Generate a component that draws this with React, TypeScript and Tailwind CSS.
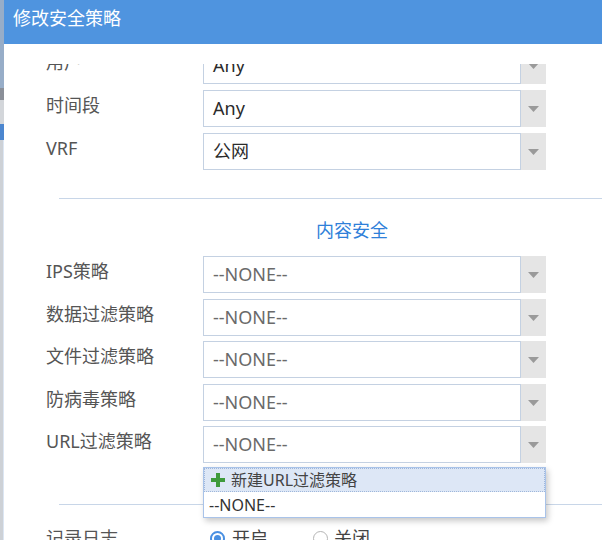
import { FC } from "react";

const font = { fontFamily: '"Noto Sans", "Noto Sans CJK SC", sans-serif' };

const Arrow: FC = () => (
  <div className="w-[25px] h-full bg-[#e5e5e5] flex items-center justify-center shrink-0">
    <svg width="11" height="6" viewBox="0 0 11 6">
      <path d="M0 0 L11 0 L5.5 6 Z" fill="#9a9a9a" />
    </svg>
  </div>
);

type RowProps = { label: string; value: string; muted?: boolean; className?: string };

const SelectRow: FC<RowProps> = ({ label, value, muted, className }) => (
  <div className={`flex items-center h-[37px] ${className ?? ""}`}>
    <div className="w-[157px] pb-[6px] text-[18px] text-[#555] whitespace-nowrap">{label}</div>
    <div className="flex h-full">
      <div
        className={`w-[318px] h-full border border-[#c4d1e2] flex items-center pl-[9px] text-[18px] ${
          muted ? "text-[#6a6a6a]" : "text-[#2b2b2b]"
        }`}
      >
        {value}
      </div>
      <Arrow />
    </div>
  </div>
);

const Divider: FC<{ className?: string }> = ({ className }) => (
  <div className={`ml-[13px] h-px bg-[#c8d6e8] ${className ?? ""}`} />
);

export default function App() {
  return (
    <div className="w-[602px] h-[540px] overflow-hidden flex bg-white" style={font}>
      {/* page behind the dialog */}
      <div className="w-[4px] h-full flex flex-col shrink-0 bg-[#cfd3d8]">
        <div className="h-[88px] bg-[#97adc8]" />
        <div className="h-[12px] bg-[#8a8f98]" />
        <div className="h-[24px] bg-[#d3d6da]" />
        <div className="h-[16px] bg-[#4c86cf]" />
        <div className="flex-1 bg-[#cdd1d6] border-r border-[#dce6f3]" />
      </div>

      {/* dialog */}
      <div className="flex-1 flex flex-col min-w-0">
        <div className="h-[44px] shrink-0 bg-[#4f94df] text-white text-[18px] pl-[9px] pt-[5px]">
          修改安全策略
        </div>

        <div className="flex-1 pt-[20px] overflow-hidden">
          <div className="h-full overflow-hidden pl-[42px]">
            <div className="-mt-[17px] flex flex-col">
              <SelectRow label="用户" value="Any" className="mb-[6px]" />
              <SelectRow label="时间段" value="Any" className="mb-[6px]" />
              <SelectRow label="VRF" value="公网" />

              <Divider className="mt-[28px]" />

              <div className="h-[24px] mt-[19px] mb-[14px] pl-[270px] text-[18px] leading-[24px] text-[#2f80d9]">
                内容安全
              </div>

              <SelectRow label="IPS策略" value="--NONE--" muted className="mb-[6px]" />
              <SelectRow label="数据过滤策略" value="--NONE--" muted className="mb-[5px]" />
              <SelectRow label="文件过滤策略" value="--NONE--" muted className="mb-[6px]" />
              <SelectRow label="防病毒策略" value="--NONE--" muted className="mb-[5px]" />

              <div className="relative">
                <SelectRow label="URL过滤策略" value="--NONE--" muted />

                {/* open dropdown */}
                <div className="absolute z-10 left-[157px] top-[41px] w-[343px] bg-white border border-[#a9c3e9] shadow-[2px_3px_6px_rgba(0,0,0,0.22)] text-[16px]">
                  <div className="h-[24px] bg-[#dde7f6] border border-dotted border-[#9fb7da] flex items-center pl-[6px] text-[#444]">
                    <svg width="14" height="14" viewBox="0 0 14 14" className="mr-[6px]">
                      <path d="M5 0 H9 V5 H14 V9 H9 V14 H5 V9 H0 V5 H5 Z" fill="#3f9b3c" />
                    </svg>
                    新建URL过滤策略
                  </div>
                  <div className="h-[25px] flex items-center pl-[5px] text-[#333]">--NONE--</div>
                </div>
              </div>

              <Divider className="mt-[41px]" />

              <div className="flex items-center h-[37px] mt-[18px]">
                <div className="w-[164px] pb-[6px] text-[18px] text-[#555]">记录日志</div>
                <div className="flex items-center pb-[6px] text-[18px] text-[#444]">
                  <span className="w-[15px] h-[15px] rounded-full border-[2px] border-[#4a90e2] flex items-center justify-center mr-[7px]">
                    <span className="w-[7px] h-[7px] rounded-full bg-[#4a90e2]" />
                  </span>
                  <span className="mr-[45px]">开启</span>
                  <span className="w-[15px] h-[15px] rounded-full border border-[#b5b5b5] mr-[6px]" />
                  <span>关闭</span>
                </div>
              </div>
            </div>
          </div>
        </div>
      </div>
    </div>
  );
}
